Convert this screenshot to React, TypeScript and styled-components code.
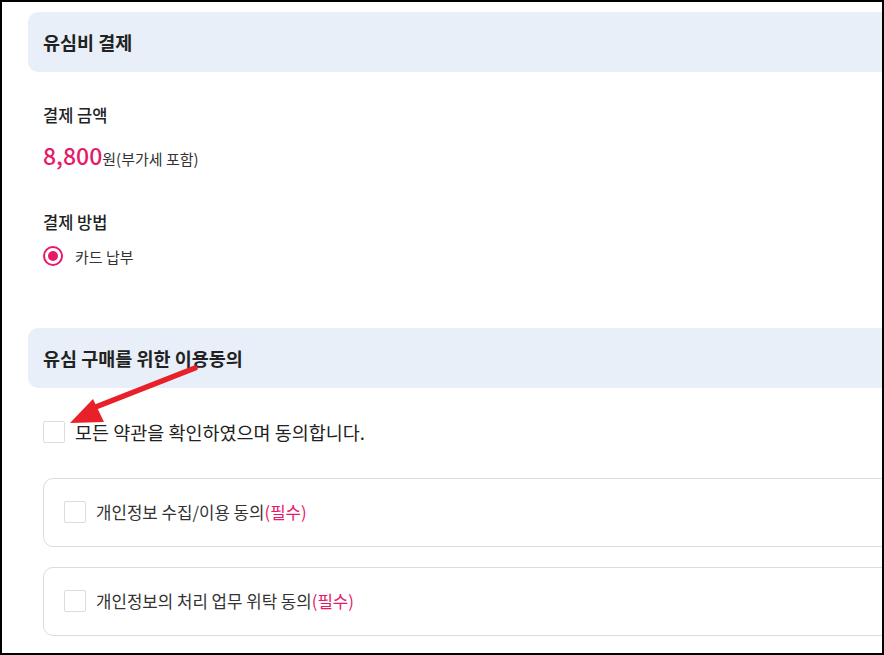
import React from "react";
import styled, { createGlobalStyle } from "styled-components";

const Global = createGlobalStyle`
  html, body { margin: 0; padding: 0; background: #fff; }
  body { font-family: "Noto Sans CJK KR", "Noto Sans", sans-serif; color: #333; }
`;

const PINK = "#e6196b";

const Frame = styled.div`
  position: relative;
  width: 884px;
  height: 655px;
  box-sizing: border-box;
  border: 2px solid #000;
  overflow: hidden;
  background: #fff;
`;

const Content = styled.div`
  width: 1000px;
  padding: 10px 0 0 26px;
  display: flex;
  flex-direction: column;
`;

const SectionHeader = styled.div<{ $mt?: number }>`
  height: 60px;
  margin-top: ${(p) => p.$mt ?? 0}px;
  background: #e8eff8;
  border-radius: 10px;
  display: flex;
  align-items: center;
  padding-left: 15px;
  font-size: 18.5px;
  font-weight: 700;
  color: #222;
`;

const Body = styled.div`
  padding-left: 15px;
  display: flex;
  flex-direction: column;
`;

const Label = styled.div<{ $mt: number }>`
  margin-top: ${(p) => p.$mt}px;
  font-size: 16.5px;
  font-weight: 500;
  line-height: 24px;
  color: #222;
`;

const Amount = styled.div`
  margin-top: 11px;
  height: 30px;
  display: flex;
  align-items: baseline;
  color: #333;
  font-size: 15px;
`;

const Price = styled.span`
  color: ${PINK};
  font-size: 23px;
  font-weight: 500;
`;

const RadioRow = styled.label`
  margin-top: 10px;
  height: 24px;
  display: flex;
  align-items: center;
  gap: 12px;
  font-size: 15px;
  color: #333;
`;

const RadioDot = styled.span`
  width: 20px;
  height: 20px;
  box-sizing: border-box;
  border: 2px solid ${PINK};
  border-radius: 50%;
  display: flex;
  align-items: center;
  justify-content: center;
  &::after {
    content: "";
    width: 10px;
    height: 10px;
    border-radius: 50%;
    background: ${PINK};
  }
`;

const Box = styled.span`
  width: 22px;
  height: 22px;
  box-sizing: border-box;
  border: 1px solid #dcdcdc;
  border-radius: 2px;
  background: #fff;
  flex: none;
`;

const AllRow = styled.label`
  margin-top: 32px;
  height: 24px;
  display: flex;
  align-items: center;
  gap: 10px;
  font-size: 18.5px;
  color: #222;
`;

const Card = styled.label<{ $mt: number }>`
  margin-top: ${(p) => p.$mt}px;
  height: 69px;
  box-sizing: border-box;
  border: 1px solid #dcdcdc;
  border-radius: 10px;
  display: flex;
  align-items: center;
  gap: 10px;
  padding: 0 0 2px 20px;
  font-size: 16.8px;
  color: #333;
`;

const Required = styled.span`
  color: ${PINK};
`;

const ArrowSvg = styled.svg`
  position: absolute;
  left: 0;
  top: 0;
  pointer-events: none;
`;

export default function App() {
  return (
    <>
      <Global />
      <Frame>
        <Content>
          <SectionHeader>유심비 결제</SectionHeader>
          <Body>
            <Label $mt={31}>결제 금액</Label>
            <Amount>
              <Price>8,800</Price>원(부가세 포함)
            </Amount>
            <Label $mt={42}>결제 방법</Label>
            <RadioRow>
              <RadioDot />
              카드 납부
            </RadioRow>
          </Body>
          <SectionHeader $mt={60}>유심 구매를 위한 이용동의</SectionHeader>
          <Body>
            <AllRow>
              <Box />
              모든 약관을 확인하였으며 동의합니다.
            </AllRow>
            <Card $mt={34}>
              <Box />
              <span>
                개인정보 수집/이용 동의<Required>(필수)</Required>
              </span>
            </Card>
            <Card $mt={20}>
              <Box />
              <span>
                개인정보의 처리 업무 위탁 동의<Required>(필수)</Required>
              </span>
            </Card>
          </Body>
        </Content>
        <ArrowSvg width="884" height="655" viewBox="-2 -2 884 655">
          <line x1="191" y1="364" x2="84" y2="406" stroke="#e8202a" strokeWidth="5.5" strokeLinecap="round" />
          <polygon points="66,419 89,395 100,418" fill="#e8202a" />
        </ArrowSvg>
      </Frame>
    </>
  );
}
